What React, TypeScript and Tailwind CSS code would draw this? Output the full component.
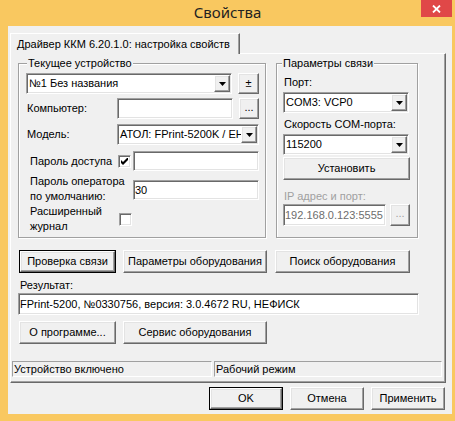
import type { ReactNode } from "react";

// Classic (unthemed) Win32 edges, the way a Delphi dialog draws them.
const raised =
  "border border-t-white border-l-white border-r-[#696969] border-b-[#696969] bg-[#f0f0f0] shadow-[inset_-1px_-1px_0_#a0a0a0,inset_1px_1px_0_#e3e3e3]";
const sunken =
  "border border-t-[#a0a0a0] border-l-[#a0a0a0] border-r-white border-b-white p-[1px] shadow-[inset_1px_1px_0_#696969,inset_-1px_-1px_0_#e3e3e3]";

function Btn({
  className = "",
  children,
  primary = false,
  disabled = false,
}: {
  className?: string;
  children: ReactNode;
  primary?: boolean;
  disabled?: boolean;
}) {
  if (primary) {
    return (
      <div className={`flex shrink-0 border border-black ${className}`}>
        <div className={`flex flex-1 items-center justify-center ${raised}`}>{children}</div>
      </div>
    );
  }
  return (
    <div
      className={`flex shrink-0 items-center justify-center ${raised} ${
        disabled ? "text-[#a0a0a0]" : ""
      } ${className}`}
    >
      {children}
    </div>
  );
}

function Arrow() {
  return (
    <svg width="7" height="4" viewBox="0 0 7 4">
      <polygon points="0,0 7,0 3.5,4" fill="#000" />
    </svg>
  );
}

function Combo({ className = "", value }: { className?: string; value: string }) {
  return (
    <div className={`flex shrink-0 bg-white ${sunken} ${className}`}>
      <div className="flex flex-1 items-center overflow-hidden whitespace-nowrap pl-[1px]">{value}</div>
      <div className={`flex w-[16px] shrink-0 items-center justify-center ${raised}`}>
        <Arrow />
      </div>
    </div>
  );
}

function Edit({
  className = "",
  value = "",
  disabled = false,
}: {
  className?: string;
  value?: string;
  disabled?: boolean;
}) {
  return (
    <div
      className={`flex shrink-0 items-center overflow-hidden whitespace-nowrap bg-white pl-[1px] ${sunken} ${
        disabled ? "text-[#6d6d6d]" : ""
      } ${className}`}
    >
      {value}
    </div>
  );
}

function Check({ checked = false, className = "" }: { checked?: boolean; className?: string }) {
  return (
    <div className={`flex h-[13px] w-[13px] shrink-0 items-center justify-center bg-white ${sunken} ${className}`}>
      {checked && (
        <svg width="7" height="7" viewBox="0 0 7 7">
          <polygon points="0,2 2,4 7,-1 7,2 2,7 0,5" fill="#000" />
        </svg>
      )}
    </div>
  );
}

export default function App() {
  return (
    <div className="relative flex h-[421px] w-[455px] flex-col bg-[#f9c860] font-['Liberation_Sans',Arial,sans-serif] text-[11px] leading-[13px] text-black">
      {/* caption */}
      <div className="flex h-[26px] shrink-0 items-center justify-center pb-[2px]">
        <span className="font-['Noto_Sans',sans-serif] text-[15px] leading-[18px] text-[#222]">Свойства</span>
      </div>
      <div className="absolute right-[3px] top-0 flex h-[17px] w-[31px] items-center justify-center bg-[#e04848]">
        <svg width="9" height="8" viewBox="0 0 9 8">
          <path d="M1 0.5 L8 7.5 M8 0.5 L1 7.5" stroke="#fff" strokeWidth="1.8" />
        </svg>
      </div>

      {/* client area */}
      <div className="ml-[8px] flex h-[388px] w-[444px] flex-col bg-[#f0f0f0] pl-[2px] pt-[7px]">
        <div className="relative z-10 flex h-[21px] w-[230px] items-center border-l border-t border-r border-l-white border-t-white border-r-[#696969] bg-[#f0f0f0] pl-[6px] shadow-[inset_-1px_0_0_#a0a0a0]">
          Драйвер ККМ 6.20.1.0: настройка свойств
        </div>

        <div className="-mt-[1px] flex h-[330px] w-[436px] flex-col border border-t-white border-l-white border-r-[#696969] border-b-[#696969] shadow-[inset_-1px_-1px_0_#a0a0a0]">
          <div className="ml-[7px] mt-[3px] flex">
            {/* Текущее устройство */}
            <fieldset className="m-0 w-[248px] border border-[#a0a0a0] p-0 shadow-[inset_1px_1px_0_#fff,1px_1px_0_#fff]">
              <legend className="ml-[8px] bg-[#f0f0f0] px-[1px] leading-[13px]">Текущее устройство</legend>
              <div className="flex flex-col pb-[3px] pl-[7px]">
                <div className="mt-[3px] flex h-[21px]">
                  <Combo className="w-[206px]" value="№1 Без названия" />
                  <Btn className="ml-[6px] w-[21px]">±</Btn>
                </div>
                <div className="mt-[4px] flex h-[21px] items-center">
                  <span className="ml-[1px] w-[90px]">Компьютер:</span>
                  <Edit className="h-[21px] w-[116px]" />
                  <Btn className="ml-[6px] h-[21px] w-[20px]">
                    <span className="-mt-[3px]">...</span>
                  </Btn>
                </div>
                <div className="mt-[5px] flex h-[21px] items-center">
                  <span className="ml-[1px] w-[90px]">Модель:</span>
                  <Combo className="h-[21px] w-[142px]" value="АТОЛ: FPrint-5200K / ЕНВД" />
                </div>
                <div className="mt-[6px] flex h-[20px] items-center">
                  <span className="ml-[4px] w-[88px]">Пароль доступа</span>
                  <Check checked />
                  <Edit className="ml-[2px] h-[20px] w-[126px]" />
                </div>
                <div className="mt-[3px] flex h-[30px] items-start">
                  <span className="ml-[4px] w-[103px] leading-[15px]">
                    Пароль оператора
                    <br />
                    по умолчанию:
                  </span>
                  <Edit className="mt-[6px] h-[20px] w-[126px]" value="30" />
                </div>
                <div className="flex h-[30px] items-start">
                  <span className="ml-[4px] w-[89px] leading-[15px]">
                    Расширенный
                    <br />
                    журнал
                  </span>
                  <Check className="mt-[9px]" />
                </div>
              </div>
            </fieldset>

            {/* Параметры связи */}
            <fieldset className="m-0 ml-[10px] w-[142px] border border-[#a0a0a0] p-0 shadow-[inset_1px_1px_0_#fff,1px_1px_0_#fff]">
              <legend className="ml-[5px] bg-[#f0f0f0] px-[1px] leading-[13px]">Параметры связи</legend>
              <div className="flex flex-col pl-[6px]">
                <span className="ml-[1px] mt-[6px]">Порт:</span>
                <Combo className="mt-[3px] h-[21px] w-[126px]" value="COM3: VCP0" />
                <span className="ml-[1px] mt-[5px]">Скорость COM-порта:</span>
                <Combo className="mt-[3px] h-[21px] w-[126px]" value="115200" />
                <Btn className="mt-[2px] h-[23px] w-[127px]">Установить</Btn>
                <span className="ml-[1px] mt-[10px] text-[#a0a0a0]">IP адрес и порт:</span>
                <div className="mt-[1px] flex h-[22px]">
                  <Edit className="w-[103px]" value="192.168.0.123:5555" disabled />
                  <Btn className="ml-[4px] w-[20px]" disabled>
                    <span className="-mt-[3px]">...</span>
                  </Btn>
                </div>
              </div>
            </fieldset>
          </div>

          <div className="ml-[8px] mt-[12px] flex h-[23px]">
            <Btn primary className="w-[97px]">
              Проверка связи
            </Btn>
            <Btn className="ml-[7px] w-[144px]">Параметры оборудования</Btn>
            <Btn className="ml-[8px] w-[135px]">Поиск оборудования</Btn>
          </div>

          <span className="ml-[9px] mt-[6px]">Результат:</span>
          <Edit
            className="ml-[7px] mt-[1px] h-[22px] w-[401px]"
            value="FPrint-5200, №0330756, версия: 3.0.4672 RU, НЕФИСК"
          />

          <div className="ml-[8px] mt-[6px] flex h-[23px]">
            <Btn className="w-[97px]">О программе...</Btn>
            <Btn className="ml-[7px] w-[144px]">Сервис оборудования</Btn>
          </div>

          <div className="ml-[1px] mt-[17px] flex h-[16px]">
            <div className="flex w-[200px] items-center border border-t-[#a0a0a0] border-l-[#a0a0a0] border-r-white border-b-white pl-[1px]">
              Устройство включено
            </div>
            <div className="ml-[2px] flex w-[228px] items-center border border-t-[#a0a0a0] border-l-[#a0a0a0] border-r-white border-b-white pl-[1px]">
              Рабочий режим
            </div>
          </div>
        </div>

        <div className="mt-[4px] flex h-[23px] w-[436px] justify-end pr-[1px]">
          <Btn primary className="w-[74px]">
            OK
          </Btn>
          <Btn className="ml-[7px] w-[74px]">Отмена</Btn>
          <Btn className="ml-[7px] w-[74px]">Применить</Btn>
        </div>
      </div>
    </div>
  );
}
